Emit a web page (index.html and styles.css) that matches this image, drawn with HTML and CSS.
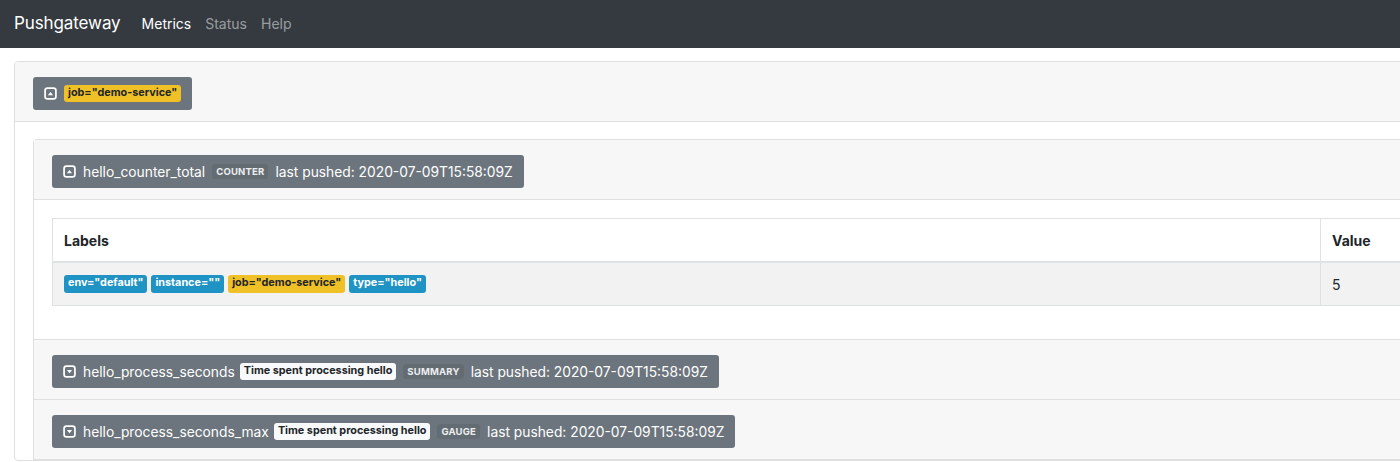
FILE: index.html
```html
<!DOCTYPE html>
<html>
<head>
<meta charset="utf-8">
<title>Pushgateway</title>
<link rel="stylesheet" href="styles.css">
</head>
<body>
<nav class="navbar">
  <span class="brand">Pushgateway</span>
  <a class="nav-link active">Metrics</a>
  <a class="nav-link">Status</a>
  <a class="nav-link">Help</a>
</nav>
<main class="page">
  <section class="card">
    <div class="card-header">
      <button class="btn">
        <svg class="toggle" viewBox="0 0 12 12"><rect x="1" y="1" width="10" height="10" rx="2.2" fill="none" stroke="#fff" stroke-width="1.6"/><path d="M3.6 7.6 L6 4.6 L8.4 7.6 Z" fill="#fff"/></svg>
        <span class="badge badge-warning">job="demo-service"</span>
      </button>
    </div>
    <div class="card-body">
      <div class="accordion">
        <section class="metric">
          <div class="card-header">
            <button class="btn">
              <svg class="toggle" viewBox="0 0 12 12"><rect x="1" y="1" width="10" height="10" rx="2.2" fill="none" stroke="#fff" stroke-width="1.6"/><path d="M3.6 7.6 L6 4.6 L8.4 7.6 Z" fill="#fff"/></svg>
              <span>hello_counter_total</span>
              <span class="badge badge-type">COUNTER</span>
              <span>last pushed: 2020-07-09T15:58:09Z</span>
            </button>
          </div>
          <div class="metric-body">
            <table class="table">
              <thead>
                <tr><th class="col-labels">Labels</th><th class="col-value">Value</th></tr>
              </thead>
              <tbody>
                <tr>
                  <td>
                    <div class="labels-cell">
                      <span class="badge badge-info">env="default"</span>
                      <span class="badge badge-info">instance=""</span>
                      <span class="badge badge-warning">job="demo-service"</span>
                      <span class="badge badge-info">type="hello"</span>
                    </div>
                  </td>
                  <td>5</td>
                </tr>
              </tbody>
            </table>
          </div>
        </section>
        <section class="metric">
          <div class="card-header">
            <button class="btn">
              <svg class="toggle" viewBox="0 0 12 12"><rect x="1" y="1" width="10" height="10" rx="2.2" fill="none" stroke="#fff" stroke-width="1.6"/><path d="M3.6 4.6 L6 7.6 L8.4 4.6 Z" fill="#fff"/></svg>
              <span>hello_process_seconds</span>
              <span class="badge badge-light">Time spent processing hello</span>
              <span class="badge badge-type">SUMMARY</span>
              <span>last pushed: 2020-07-09T15:58:09Z</span>
            </button>
          </div>
        </section>
        <section class="metric">
          <div class="card-header">
            <button class="btn">
              <svg class="toggle" viewBox="0 0 12 12"><rect x="1" y="1" width="10" height="10" rx="2.2" fill="none" stroke="#fff" stroke-width="1.6"/><path d="M3.6 4.6 L6 7.6 L8.4 4.6 Z" fill="#fff"/></svg>
              <span>hello_process_seconds_max</span>
              <span class="badge badge-light">Time spent processing hello</span>
              <span class="badge badge-type">GAUGE</span>
              <span>last pushed: 2020-07-09T15:58:09Z</span>
            </button>
          </div>
        </section>
      </div>
    </div>
  </section>
</main>
</body>
</html>
```
FILE: styles.css
```css
html, body {
  margin: 0;
  padding: 0;
  overflow: hidden;
  background: #fff;
  font-family: Inter, "Liberation Sans", sans-serif;
  color: #212529;
}

.navbar {
  height: 48px;
  background: #343a40;
  display: flex;
  align-items: center;
  padding: 0 14px 2px;
  box-sizing: border-box;
}

.brand {
  color: #fff;
  font-size: 17px;
  margin-right: 14px;
  letter-spacing: -0.1px;
}

.nav-link {
  color: rgba(255, 255, 255, 0.5);
  font-size: 14px;
  padding: 0 7px;
}

.nav-link.active {
  color: #fff;
}

.page {
  width: 1472px;
  box-sizing: border-box;
  padding: 13px 14px 0;
}

.card {
  border: 1px solid #dfdfdf;
  border-radius: 4px;
}

.card-header {
  background: #f7f7f7;
  padding: 15px 18px 11px;
  border-bottom: 1px solid #dfdfdf;
  height: 59px;
  box-sizing: border-box;
}

.card > .card-header {
  height: 60px;
  border-radius: 3px 3px 0 0;
}

.card-body {
  padding: 17px 18px 0;
}

.accordion {
  border: 1px solid #dfdfdf;
  border-bottom: 0;
  border-radius: 4px 4px 0 0;
}

.metric {
  border-bottom: 1px solid #dfdfdf;
}

.metric > .card-header {
  border-bottom: 0;
}

.metric:first-child > .card-header {
  border-bottom: 1px solid #dfdfdf;
  height: 60px;
}

.btn {
  display: inline-flex;
  align-items: center;
  gap: 5px;
  height: 33px;
  box-sizing: border-box;
  padding: 0 11px;
  background: #6c757d;
  color: #fff;
  border: 0;
  border-radius: 3px;
  font-family: inherit;
  font-size: 13.8px;
}

.toggle {
  width: 13px;
  height: 13px;
  margin-right: 2px;
}

.badge {
  display: inline-block;
  font-size: 10.8px;
  font-weight: 700;
  line-height: 1;
  padding: 3px 4px 4px;
  border-radius: 3px;
  white-space: nowrap;
}

.badge-warning {
  background: #f0c027;
  color: #212529;
}

.badge-info {
  background: #1f93c4;
  color: #fff;
}

.badge-light {
  background: #f8f9fa;
  color: #212529;
}

.badge-type {
  background: #646c73;
  color: #eceeef;
  font-size: 9.5px;
  letter-spacing: 0.2px;
  margin: 0 2px;
  padding: 3px 4px;
}

.metric-body {
  padding: 18px 18px 33px;
  background: #fff;
}

.table {
  width: 100%;
  border-collapse: collapse;
  font-size: 14px;
}

.table th,
.table td {
  border: 1px solid #dee2e6;
  text-align: left;
  padding: 0 11px;
}

.table th {
  height: 42px;
  font-weight: 700;
  border-bottom: 2px solid #dee2e6;
}

.table td {
  height: 42px;
}

.table tbody tr {
  background: #f2f2f2;
}

.col-value {
  width: 76px;
}

.labels-cell {
  display: flex;
  gap: 4px;
}
```
